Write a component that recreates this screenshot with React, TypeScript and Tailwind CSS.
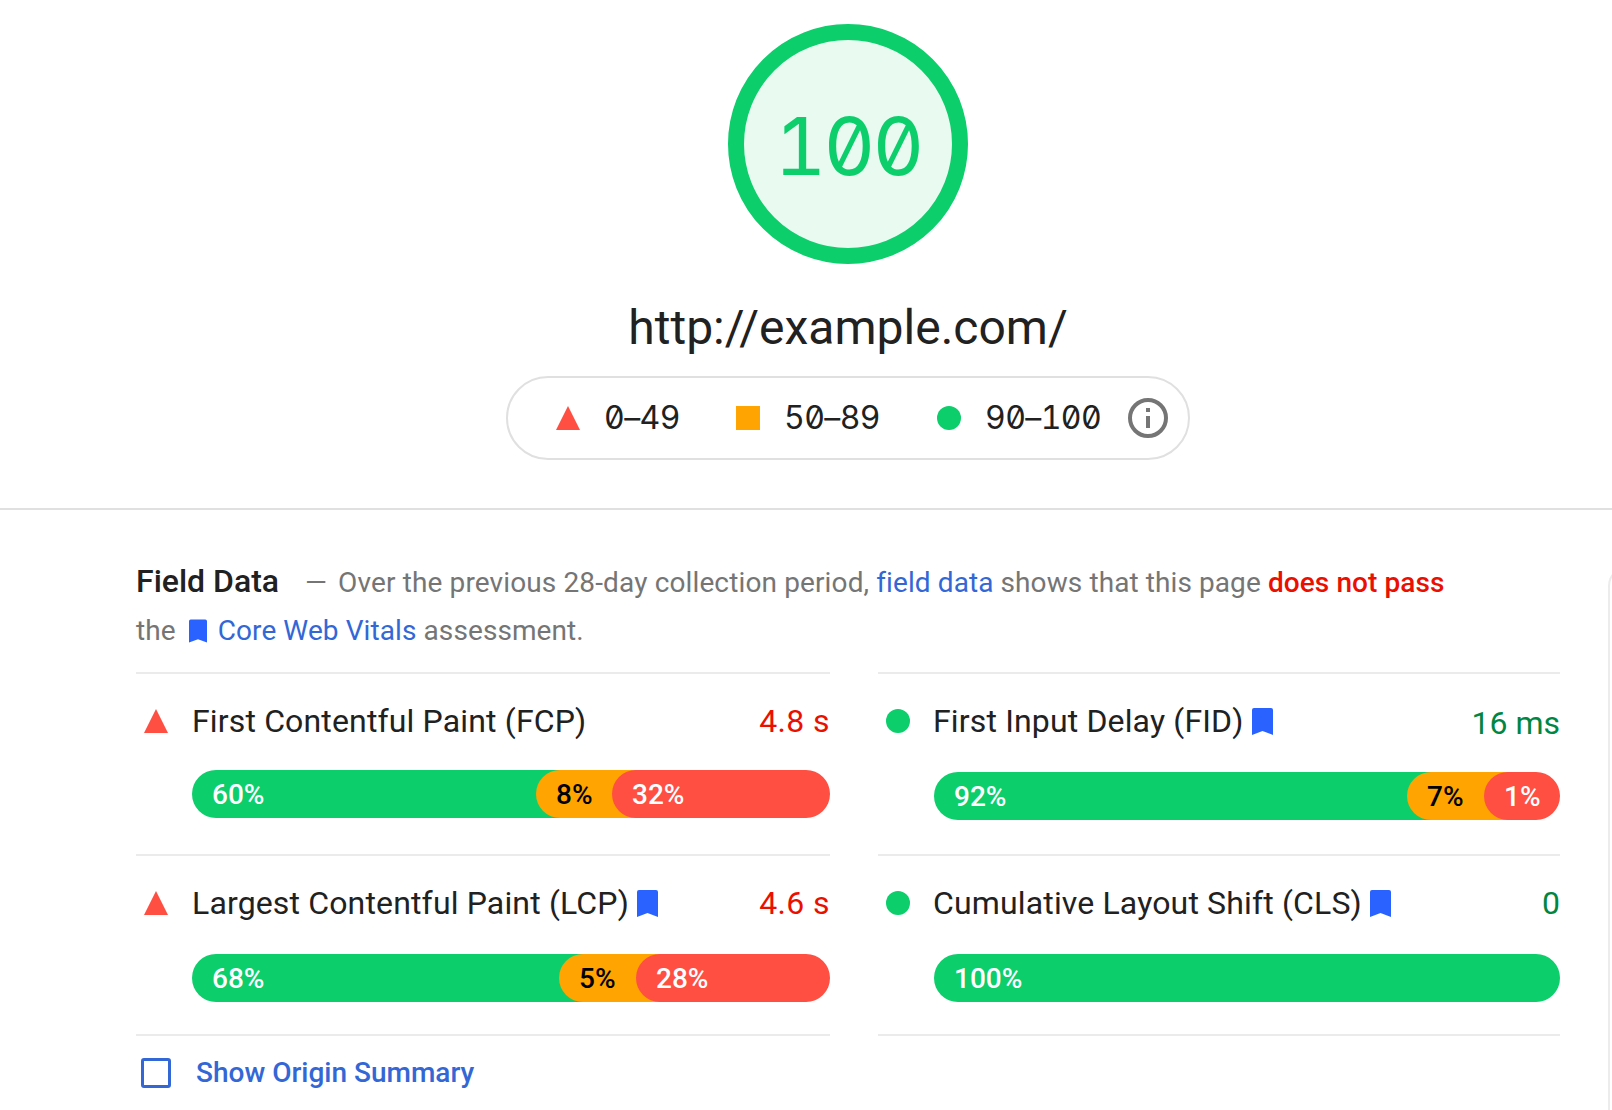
const MONO = "font-['Inter',sans-serif] [font-feature-settings:'zero','tnum']";

type Seg = { label: string; width: string; color: string; text: string };

type Metric = {
  name: string;
  value: string;
  valueColor: string;
  status: "fail" | "pass";
  bookmark?: boolean;
  titleGap: string;
  segs: Seg[];
};

const green = "bg-[#0cce6b]";
const orange = "bg-[#ffa400]";
const red = "bg-[#ff4e42]";

const metrics: Metric[] = [
  {
    name: "First Contentful Paint (FCP)",
    value: "4.8 s",
    valueColor: "tracking-[0.4px] text-[#eb0f00]",
    status: "fail",
    titleGap: "mb-[25px]",
    segs: [
      { label: "60%", width: "w-[392px]", color: green, text: "text-white" },
      { label: "8%", width: "w-[124px]", color: orange, text: "text-black" },
      { label: "32%", width: "w-[218px]", color: red, text: "text-white" },
    ],
  },
  {
    name: "First Input Delay (FID)",
    value: "16 ms",
    valueColor: "mt-[3px] text-[#018642]",
    status: "pass",
    bookmark: true,
    titleGap: "mb-[27px]",
    segs: [
      { label: "92%", width: "w-[521px]", color: green, text: "text-white" },
      { label: "7%", width: "w-[125px]", color: orange, text: "text-black" },
      { label: "1%", width: "w-[76px]", color: red, text: "text-white" },
    ],
  },
  {
    name: "Largest Contentful Paint (LCP)",
    value: "4.6 s",
    valueColor: "tracking-[0.4px] text-[#eb0f00]",
    status: "fail",
    bookmark: true,
    titleGap: "mb-[27px]",
    segs: [
      { label: "68%", width: "w-[415px]", color: green, text: "text-white" },
      { label: "5%", width: "w-[125px]", color: orange, text: "text-black" },
      { label: "28%", width: "w-[194px]", color: red, text: "text-white" },
    ],
  },
  {
    name: "Cumulative Layout Shift (CLS)",
    value: "0",
    valueColor: "text-[#018642]",
    status: "pass",
    bookmark: true,
    titleGap: "mb-[27px]",
    segs: [{ label: "100%", width: "w-[626px]", color: green, text: "text-white" }],
  },
];

function Triangle() {
  return (
    <svg width="24" height="24" viewBox="0 0 24 24" className="shrink-0">
      <path d="M12 0L24 24H0z" fill="#ff4e42" />
    </svg>
  );
}

function Bookmark({ className }: { className: string }) {
  return (
    <svg viewBox="0 0 21 27" className={className}>
      <path
        d="M2 0h17a2 2 0 0 1 2 2v25l-10.5-4L0 27V2a2 2 0 0 1 2-2z"
        fill="#2962ff"
      />
    </svg>
  );
}

function MetricRow({ m }: { m: Metric }) {
  return (
    <div className="border-t-2 border-[#ebebeb] pt-[23px]">
      <div className={`flex h-12 items-center pl-2 ${m.titleGap}`}>
        {m.status === "fail" ? (
          <Triangle />
        ) : (
          <div className={`h-6 w-6 shrink-0 rounded-full ${green}`} />
        )}
        <span
          className={`text-[32px] leading-[48px] tracking-[0.15px] text-[#212121] ${
            m.status === "pass" ? "ml-[23px]" : "ml-6"
          }`}
        >
          {m.name}
        </span>
        {m.bookmark && <Bookmark className="ml-2 h-[27px] w-[21px] shrink-0" />}
        <span className={`ml-auto text-[32px] leading-[48px] ${m.valueColor}`}>{m.value}</span>
      </div>
      <div className="ml-14 flex h-12">
        {m.segs.map((s, i) => (
          <div
            key={s.label}
            className={`flex h-12 items-center rounded-full pl-5 pt-0.5 text-[28px] font-medium ${s.width} ${s.color} ${s.text} ${
              i > 0 ? "-ml-12" : ""
            }`}
          >
            {s.label}
          </div>
        ))}
      </div>
    </div>
  );
}

export default function App() {
  return (
    <div className="relative min-h-[1110px] overflow-hidden bg-white font-['Roboto',sans-serif] text-[#212121]">
      {/* sliver of the next panel at the right edge */}
      <div className="absolute left-[1608px] top-[566px] h-[560px] w-10 rounded-tl-[20px] border-l-2 border-t-2 border-[#ececec]" />

      <div className="flex flex-col items-center pl-[84px] pt-6">
        <div className="flex h-60 w-60 items-center justify-center rounded-full border-[16px] border-[#0cce6b] bg-[#e9faf1]">
          <span className={`${MONO} mt-1 text-[80px] leading-none tracking-[-2.8px] text-[#0cce6b]`}>100</span>
        </div>
        <div className="mt-9 text-[48px] leading-[56px]">http://example.com/</div>
        <div className={`${MONO} mt-5 flex h-[84px] w-[684px] items-center rounded-[42px] border-2 border-[#e0e0e0] pl-[48px] text-[32px] tracking-[-0.6px]`}>
          <Triangle />
          <span className="ml-6 w-[76px]">0–49</span>
          <div className="ml-14 h-6 w-6 bg-[#ffa400]" />
          <span className="ml-6 w-[97px]">50–89</span>
          <div className="ml-14 h-6 w-6 rounded-full bg-[#0cce6b]" />
          <span className="ml-6 w-[119px]">90–100</span>
          <svg width="40" height="40" viewBox="0 0 40 40" className="ml-6 shrink-0">
            <circle cx="20" cy="20" r="18" fill="none" stroke="#757575" strokeWidth="4" />
            <rect x="18" y="18" width="4" height="12" fill="#757575" />
            <rect x="18" y="10" width="4" height="4" fill="#757575" />
          </svg>
        </div>
      </div>

      <div className="mt-12 border-t-2 border-[#e0e0e0] pl-[136px] pt-[47px]">
        <div className="w-[1340px] text-[28px] leading-[48px] tracking-[0.09px] text-[#757575]">
          <span className="text-[32px] font-medium tracking-normal text-[#212121]">Field Data</span>
          <span className="ml-[26px]">—</span>
          <span className="ml-[11px] tracking-[0.13px]">Over the previous 28-day collection period, </span>
          <span className="text-[#3367d6]">field data</span>
          <span> shows that this page </span>
          <span className="font-medium text-[#eb0f00]">does not pass</span>
          <br />
          <span>the</span>
          <Bookmark className="ml-[13px] mr-[11px] inline-block h-6 w-[18px] align-[-3px]" />
          <span className="text-[#3367d6]">Core Web Vitals</span>
          <span> assessment.</span>
        </div>

        <div className="mt-[17px] grid grid-cols-[694px_682px] grid-rows-[182px_180px_auto] gap-x-12">
          {metrics.map((m) => (
            <MetricRow key={m.name} m={m} />
          ))}
          <div className="border-t-2 border-[#ebebeb]" />
          <div className="border-t-2 border-[#ebebeb]" />
        </div>

        <div className="mt-[21px] flex items-center pl-[5px]">
          <div className="h-[30px] w-[30px] rounded-[3px] border-[3px] border-[#3367d6]" />
          <span className="ml-[25px] text-[28px] font-medium leading-[32px] text-[#3367d6]">
            Show Origin Summary
          </span>
        </div>
      </div>
    </div>
  );
}
